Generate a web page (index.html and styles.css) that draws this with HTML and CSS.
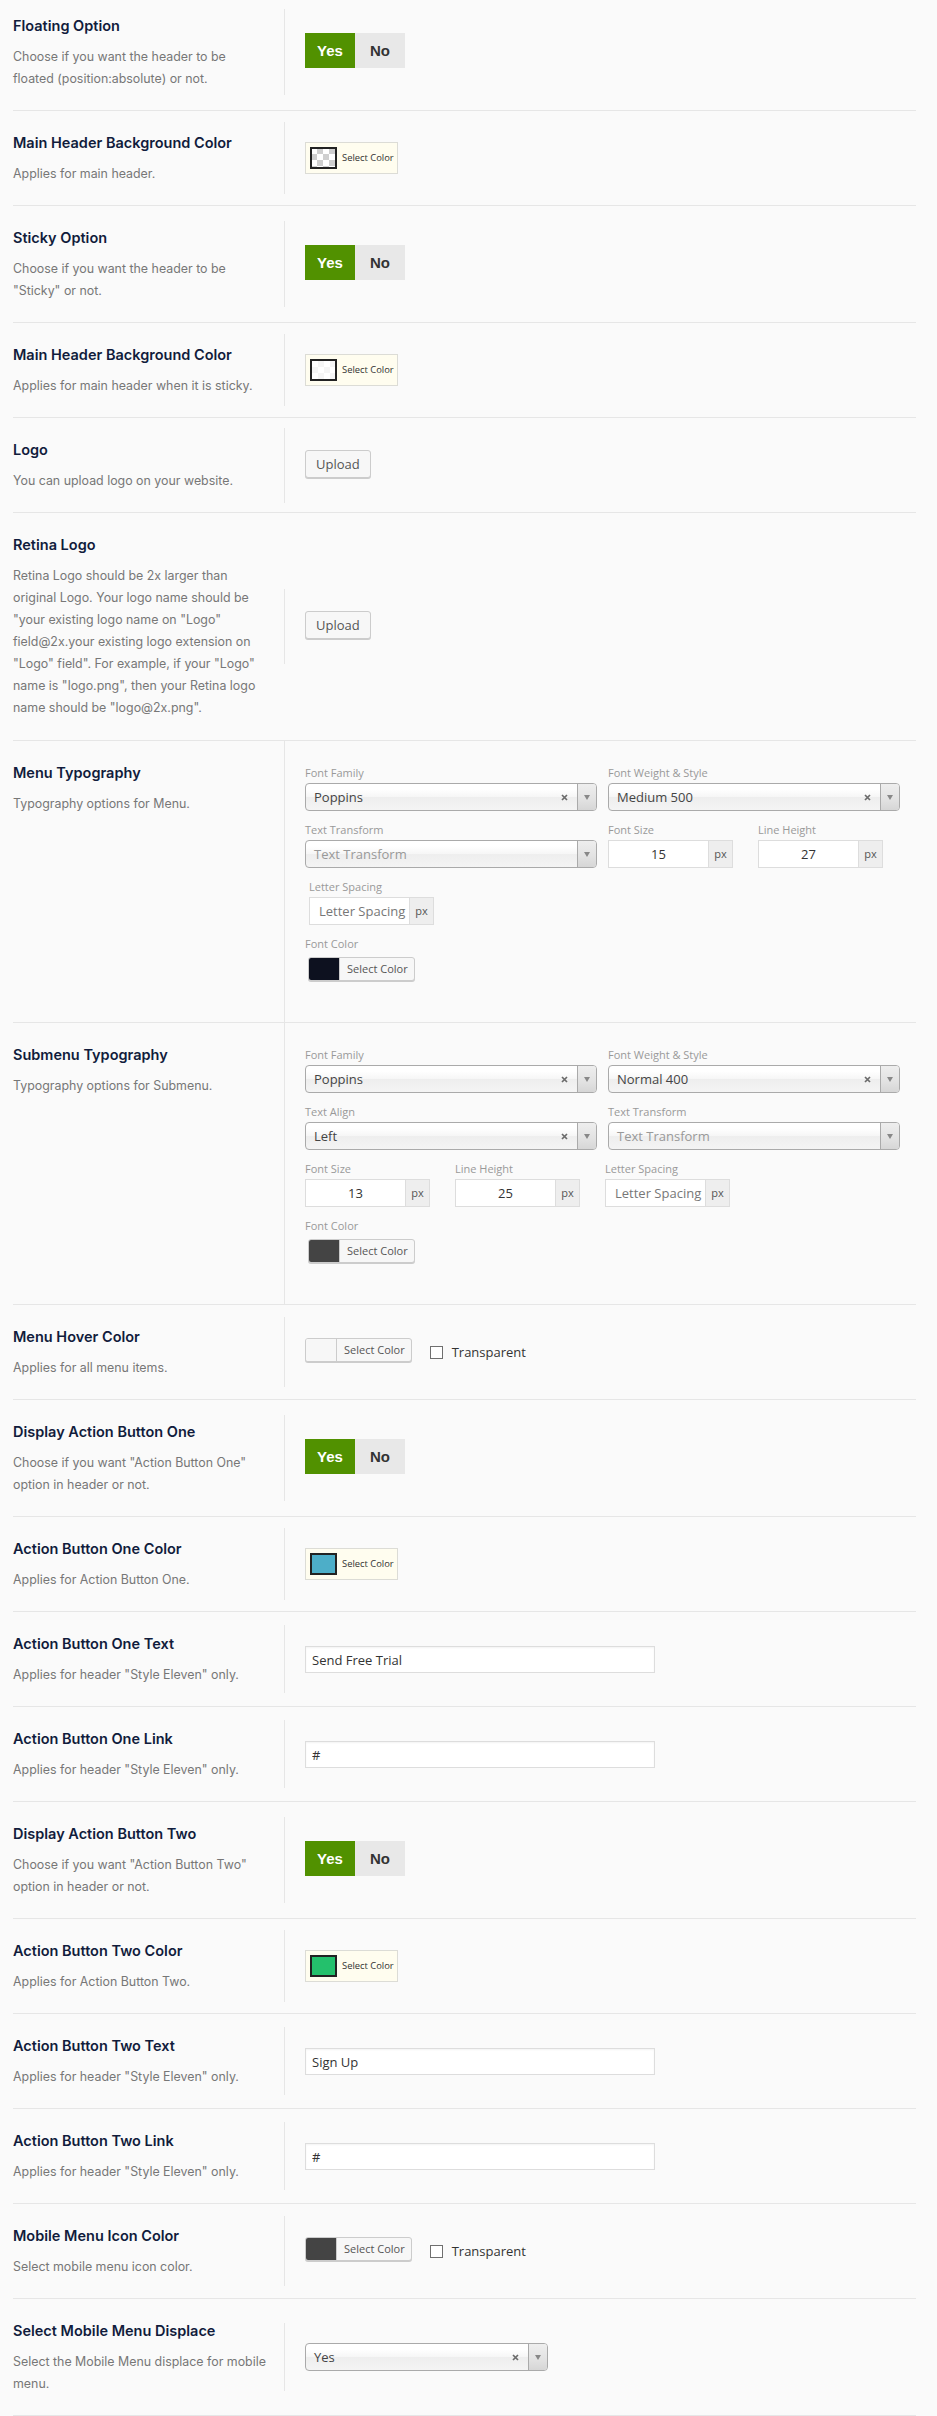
FILE: index.html
```html
<!DOCTYPE html>
<html lang="en">
<head>
<meta charset="utf-8">
<title>Header Options</title>
<link rel="stylesheet" href="styles.css">
</head>
<body>
<div class="options">

  <div class="row">
    <div class="info">
      <h3 class="title">Floating Option</h3>
      <p class="desc">Choose if you want the header to be floated (position:absolute) or not.</p>
    </div>
    <div class="field field--switch">
      <div class="switch"><span class="sw sw-yes">Yes</span><span class="sw sw-no">No</span></div>
    </div>
  </div>

  <div class="row">
    <div class="info">
      <h3 class="title">Main Header Background Color</h3>
      <p class="desc">Applies for main header.</p>
    </div>
    <div class="field field--cpick">
      <div class="cpick"><span class="cpick-swatch sw-checker"></span><span class="cpick-text">Select Color</span></div>
    </div>
  </div>

  <div class="row">
    <div class="info">
      <h3 class="title">Sticky Option</h3>
      <p class="desc">Choose if you want the header to be &quot;Sticky&quot; or not.</p>
    </div>
    <div class="field field--switch">
      <div class="switch"><span class="sw sw-yes">Yes</span><span class="sw sw-no">No</span></div>
    </div>
  </div>

  <div class="row">
    <div class="info">
      <h3 class="title">Main Header Background Color</h3>
      <p class="desc">Applies for main header when it is sticky.</p>
    </div>
    <div class="field field--cpick">
      <div class="cpick"><span class="cpick-swatch sw-faint"></span><span class="cpick-text">Select Color</span></div>
    </div>
  </div>

  <div class="row">
    <div class="info">
      <h3 class="title">Logo</h3>
      <p class="desc">You can upload logo on your website.</p>
    </div>
    <div class="field field--upload">
      <button class="btn" type="button">Upload</button>
    </div>
  </div>

  <div class="row row--tall">
    <div class="info">
      <h3 class="title">Retina Logo</h3>
      <p class="desc">Retina Logo should be 2x larger than original Logo. Your logo name should be &quot;your existing logo name on &quot;Logo&quot; field@2x.your existing logo extension on &quot;Logo&quot; field&quot;. For example, if your &quot;Logo&quot; name is &quot;logo.png&quot;, then your Retina logo name should be &quot;logo@2x.png&quot;.</p>
    </div>
    <div class="field field--upload">
      <button class="btn" type="button">Upload</button>
    </div>
  </div>

  <div class="row">
    <div class="info">
      <h3 class="title">Menu Typography</h3>
      <p class="desc">Typography options for Menu.</p>
    </div>
    <div class="field field--typo">
      <div class="typo-row">
        <div class="tf tf--half">
          <span class="tf-label">Font Family</span>
          <div class="select"><span class="select-val">Poppins</span><span class="select-clear"><svg width="7" height="7" viewBox="0 0 7 7"><path d="M1 1l5 5M6 1L1 6" stroke="#6b6b6b" stroke-width="1.7"/></svg></span><span class="select-arrow"><svg width="6" height="5" viewBox="0 0 6 5"><path d="M0 0h6L3 5z" fill="#888"/></svg></span></div>
        </div>
        <div class="tf tf--half">
          <span class="tf-label">Font Weight &amp; Style</span>
          <div class="select"><span class="select-val">Medium 500</span><span class="select-clear"><svg width="7" height="7" viewBox="0 0 7 7"><path d="M1 1l5 5M6 1L1 6" stroke="#6b6b6b" stroke-width="1.7"/></svg></span><span class="select-arrow"><svg width="6" height="5" viewBox="0 0 6 5"><path d="M0 0h6L3 5z" fill="#888"/></svg></span></div>
        </div>
      </div>
      <div class="typo-row">
        <div class="tf tf--half">
          <span class="tf-label">Text Transform</span>
          <div class="select"><span class="select-val select-val--ph">Text Transform</span><span class="select-arrow"><svg width="6" height="5" viewBox="0 0 6 5"><path d="M0 0h6L3 5z" fill="#888"/></svg></span></div>
        </div>
        <div class="tf tf--quarter">
          <span class="tf-label">Font Size</span>
          <div class="num"><input class="num-in" type="text" value="15"><span class="num-unit">px</span></div>
        </div>
        <div class="tf tf--quarter">
          <span class="tf-label">Line Height</span>
          <div class="num"><input class="num-in" type="text" value="27"><span class="num-unit">px</span></div>
        </div>
      </div>
      <div class="typo-row typo-row--indent">
        <div class="tf tf--quarter">
          <span class="tf-label">Letter Spacing</span>
          <div class="num"><input class="num-in num-in--ph" type="text" placeholder="Letter Spacing"><span class="num-unit">px</span></div>
        </div>
      </div>
      <div class="tf">
        <span class="tf-label">Font Color</span>
        <div class="wpc wpc--typo"><span class="wpc-swatch sw-navy"></span><span class="wpc-text">Select Color</span></div>
      </div>
    </div>
  </div>

  <div class="row">
    <div class="info">
      <h3 class="title">Submenu Typography</h3>
      <p class="desc">Typography options for Submenu.</p>
    </div>
    <div class="field field--typo">
      <div class="typo-row">
        <div class="tf tf--half">
          <span class="tf-label">Font Family</span>
          <div class="select"><span class="select-val">Poppins</span><span class="select-clear"><svg width="7" height="7" viewBox="0 0 7 7"><path d="M1 1l5 5M6 1L1 6" stroke="#6b6b6b" stroke-width="1.7"/></svg></span><span class="select-arrow"><svg width="6" height="5" viewBox="0 0 6 5"><path d="M0 0h6L3 5z" fill="#888"/></svg></span></div>
        </div>
        <div class="tf tf--half">
          <span class="tf-label">Font Weight &amp; Style</span>
          <div class="select"><span class="select-val">Normal 400</span><span class="select-clear"><svg width="7" height="7" viewBox="0 0 7 7"><path d="M1 1l5 5M6 1L1 6" stroke="#6b6b6b" stroke-width="1.7"/></svg></span><span class="select-arrow"><svg width="6" height="5" viewBox="0 0 6 5"><path d="M0 0h6L3 5z" fill="#888"/></svg></span></div>
        </div>
      </div>
      <div class="typo-row">
        <div class="tf tf--half">
          <span class="tf-label">Text Align</span>
          <div class="select"><span class="select-val">Left</span><span class="select-clear"><svg width="7" height="7" viewBox="0 0 7 7"><path d="M1 1l5 5M6 1L1 6" stroke="#6b6b6b" stroke-width="1.7"/></svg></span><span class="select-arrow"><svg width="6" height="5" viewBox="0 0 6 5"><path d="M0 0h6L3 5z" fill="#888"/></svg></span></div>
        </div>
        <div class="tf tf--half">
          <span class="tf-label">Text Transform</span>
          <div class="select"><span class="select-val select-val--ph">Text Transform</span><span class="select-arrow"><svg width="6" height="5" viewBox="0 0 6 5"><path d="M0 0h6L3 5z" fill="#888"/></svg></span></div>
        </div>
      </div>
      <div class="typo-row">
        <div class="tf tf--quarter">
          <span class="tf-label">Font Size</span>
          <div class="num"><input class="num-in" type="text" value="13"><span class="num-unit">px</span></div>
        </div>
        <div class="tf tf--quarter">
          <span class="tf-label">Line Height</span>
          <div class="num"><input class="num-in" type="text" value="25"><span class="num-unit">px</span></div>
        </div>
        <div class="tf tf--quarter">
          <span class="tf-label">Letter Spacing</span>
          <div class="num"><input class="num-in num-in--ph" type="text" placeholder="Letter Spacing"><span class="num-unit">px</span></div>
        </div>
      </div>
      <div class="tf">
        <span class="tf-label">Font Color</span>
        <div class="wpc wpc--typo"><span class="wpc-swatch sw-dark"></span><span class="wpc-text">Select Color</span></div>
      </div>
    </div>
  </div>

  <div class="row">
    <div class="info">
      <h3 class="title">Menu Hover Color</h3>
      <p class="desc">Applies for all menu items.</p>
    </div>
    <div class="field field--wpc">
      <div class="wpc"><span class="wpc-swatch sw-light"></span><span class="wpc-text">Select Color</span></div>
      <label class="chk-label"><input class="chk" type="checkbox">Transparent</label>
    </div>
  </div>

  <div class="row">
    <div class="info">
      <h3 class="title">Display Action Button One</h3>
      <p class="desc">Choose if you want &quot;Action Button One&quot; option in header or not.</p>
    </div>
    <div class="field field--switch">
      <div class="switch"><span class="sw sw-yes">Yes</span><span class="sw sw-no">No</span></div>
    </div>
  </div>

  <div class="row">
    <div class="info">
      <h3 class="title">Action Button One Color</h3>
      <p class="desc">Applies for Action Button One.</p>
    </div>
    <div class="field field--cpick">
      <div class="cpick"><span class="cpick-swatch sw-blue"></span><span class="cpick-text">Select Color</span></div>
    </div>
  </div>

  <div class="row">
    <div class="info">
      <h3 class="title">Action Button One Text</h3>
      <p class="desc">Applies for header &quot;Style Eleven&quot; only.</p>
    </div>
    <div class="field field--text">
      <input class="text-in" type="text" value="Send Free Trial">
    </div>
  </div>

  <div class="row">
    <div class="info">
      <h3 class="title">Action Button One Link</h3>
      <p class="desc">Applies for header &quot;Style Eleven&quot; only.</p>
    </div>
    <div class="field field--text">
      <input class="text-in" type="text" value="#">
    </div>
  </div>

  <div class="row">
    <div class="info">
      <h3 class="title">Display Action Button Two</h3>
      <p class="desc">Choose if you want &quot;Action Button Two&quot; option in header or not.</p>
    </div>
    <div class="field field--switch">
      <div class="switch"><span class="sw sw-yes">Yes</span><span class="sw sw-no">No</span></div>
    </div>
  </div>

  <div class="row">
    <div class="info">
      <h3 class="title">Action Button Two Color</h3>
      <p class="desc">Applies for Action Button Two.</p>
    </div>
    <div class="field field--cpick">
      <div class="cpick"><span class="cpick-swatch sw-green"></span><span class="cpick-text">Select Color</span></div>
    </div>
  </div>

  <div class="row">
    <div class="info">
      <h3 class="title">Action Button Two Text</h3>
      <p class="desc">Applies for header &quot;Style Eleven&quot; only.</p>
    </div>
    <div class="field field--text">
      <input class="text-in" type="text" value="Sign Up">
    </div>
  </div>

  <div class="row">
    <div class="info">
      <h3 class="title">Action Button Two Link</h3>
      <p class="desc">Applies for header &quot;Style Eleven&quot; only.</p>
    </div>
    <div class="field field--text">
      <input class="text-in" type="text" value="#">
    </div>
  </div>

  <div class="row">
    <div class="info">
      <h3 class="title">Mobile Menu Icon Color</h3>
      <p class="desc">Select mobile menu icon color.</p>
    </div>
    <div class="field field--wpc">
      <div class="wpc"><span class="wpc-swatch sw-dark"></span><span class="wpc-text">Select Color</span></div>
      <label class="chk-label"><input class="chk" type="checkbox">Transparent</label>
    </div>
  </div>

  <div class="row">
    <div class="info">
      <h3 class="title">Select Mobile Menu Displace</h3>
      <p class="desc">Select the Mobile Menu displace for mobile menu.</p>
    </div>
    <div class="field field--select">
      <div class="select select--mobile"><span class="select-val">Yes</span><span class="select-clear"><svg width="7" height="7" viewBox="0 0 7 7"><path d="M1 1l5 5M6 1L1 6" stroke="#6b6b6b" stroke-width="1.7"/></svg></span><span class="select-arrow"><svg width="6" height="5" viewBox="0 0 6 5"><path d="M0 0h6L3 5z" fill="#888"/></svg></span></div>
    </div>
  </div>

</div>
</body>
</html>
```

FILE: styles.css
```css
html, body {
  margin: 0;
  padding: 0;
  background: #fafafa;
}

.options {
  padding: 0 21px 0 13px;
}

.row {
  display: flex;
  align-items: flex-start;
  border-bottom: 1px solid #e6e6e6;
}

.row:first-child {
  margin-top: -6px;
}

.info {
  flex: none;
  width: 271px;
  box-sizing: border-box;
  padding: 22px 0 20px 0;
}

.row--tall .info {
  padding-bottom: 21px;
}

.title {
  margin: 0 0 10px;
  font-family: Inter, "Open Sans", sans-serif;
  font-weight: 600;
  font-size: 14.5px;
  line-height: 20px;
  color: #111c3c;
}

.desc {
  margin: 0;
  width: 255px;
  font-family: Inter, "Open Sans", sans-serif;
  font-size: 12.4px;
  line-height: 22px;
  color: #777777;
}

.field {
  flex: 1;
  align-self: center;
  display: flex;
  align-items: center;
  border-left: 1px solid #e6e6e6;
  padding-left: 20px;
  font-family: "Open Sans", sans-serif;
  font-size: 13px;
  line-height: 20px;
}

.field--switch { padding-top: 24px; padding-bottom: 27px; }
.field--cpick  { padding-top: 20px; padding-bottom: 20px; }
.field--upload { padding-top: 22px; padding-bottom: 25px; }
.field--wpc    { padding-top: 20px; padding-bottom: 25px; }
.field--text   { padding-top: 21px; padding-bottom: 20px; }
.field--select { padding-top: 20px; padding-bottom: 20px; }

.field--typo {
  align-self: stretch;
  display: block;
  padding-top: 22px;
  padding-bottom: 41px;
}

/* Yes / No switch */
.switch {
  display: flex;
}

.sw {
  display: flex;
  align-items: center;
  justify-content: center;
  width: 50px;
  height: 35px;
  font-family: "Liberation Sans", Arial, sans-serif;
  font-weight: 700;
  font-size: 15px;
}

.sw-yes {
  background: #519100;
  color: #ffffff;
}

.sw-no {
  background: #e8e8e8;
  color: #333333;
}

/* Cream colour picker */
.cpick {
  display: flex;
  align-items: center;
  width: 93px;
  height: 32px;
  box-sizing: border-box;
  padding-left: 4px;
  border: 1px solid #dcdcd6;
  background: #fffdef;
}

.cpick-swatch {
  flex: none;
  width: 27px;
  height: 22px;
  box-sizing: border-box;
  border: 2px solid #222222;
  margin-right: 5px;
}

.cpick-text {
  font-family: "Open Sans", sans-serif;
  font-size: 9.4px;
  color: #333333;
  white-space: nowrap;
}

.sw-checker {
  background-color: #ffffff;
  background-image: conic-gradient(#cfcfcf 25%, #ffffff 0 50%, #cfcfcf 0 75%, #ffffff 0);
  background-size: 12px 12px;
  background-position: -1px -1px;
}

.sw-faint {
  background-color: #ffffff;
  background-image: conic-gradient(#f5f5f5 25%, #ffffff 0 50%, #f5f5f5 0 75%, #ffffff 0);
  background-size: 12px 12px;
}

.sw-blue { background: #4daec8; }
.sw-green { background: #24c06c; }
.sw-navy { background: #0d111f; }
.sw-dark { background: #444444; }
.sw-light { background: #f7f7f7; }

/* Upload button */
.btn {
  height: 28px;
  padding: 0 10px;
  border: 1px solid #cccccc;
  border-radius: 3px;
  background: #f7f7f7;
  box-shadow: 0 1px 0 #cccccc;
  font-family: "Open Sans", sans-serif;
  font-size: 13px;
  color: #555555;
}

/* WP-style colour button */
.wpc {
  display: flex;
  flex: none;
  height: 24px;
  box-sizing: border-box;
  border: 1px solid #cccccc;
  border-radius: 3px;
  box-shadow: 0 1px 0 #cccccc;
  background: #f7f7f7;
  overflow: hidden;
}

.wpc--typo {
  width: max-content;
  margin-top: 3px;
  margin-left: 3px;
}

.wpc-swatch {
  width: 30px;
  border-right: 1px solid #cccccc;
}

.wpc-text {
  padding: 0 6px 0 7px;
  font-family: "Open Sans", sans-serif;
  font-size: 11px;
  line-height: 22px;
  color: #555555;
  white-space: nowrap;
}

.chk-label {
  display: flex;
  align-items: center;
  margin-left: 18px;
  margin-top: 5px;
  font-family: "Open Sans", sans-serif;
  font-size: 13px;
  color: #333333;
}

.chk {
  appearance: none;
  -webkit-appearance: none;
  width: 13px;
  height: 13px;
  margin: 0 9px 0 0;
  border: 1px solid #6f6f6f;
  background: #ffffff;
}

/* Text inputs */
.text-in {
  width: 350px;
  height: 27px;
  box-sizing: border-box;
  margin: 0;
  padding: 0 6px;
  border: 1px solid #dddddd;
  background: #ffffff;
  box-shadow: inset 0 1px 2px rgba(0, 0, 0, 0.05);
  font-family: "Open Sans", sans-serif;
  font-size: 13px;
  color: #333333;
}

/* Typography */
.typo-row {
  display: flex;
  gap: 11px;
  margin-bottom: 9px;
}

.typo-row--indent {
  padding-left: 4px;
}

.tf--half {
  width: 292px;
}

.tf--quarter {
  width: 139px;
}

.tf-label {
  display: block;
  font-family: "Open Sans", sans-serif;
  font-size: 11px;
  line-height: 20px;
  color: #999999;
  white-space: nowrap;
}

.select {
  display: flex;
  align-items: center;
  height: 28px;
  box-sizing: border-box;
  padding-left: 8px;
  border: 1px solid #aaaaaa;
  border-radius: 4px;
  background: linear-gradient(to bottom, #ffffff 0%, #ffffff 20%, #f6f6f6 50%, #eeeeee 52%, #f4f4f4 100%);
  font-family: "Open Sans", sans-serif;
  font-size: 13px;
  color: #444444;
}

.select--mobile {
  width: 243px;
}

.select-val {
  flex: 1;
  white-space: nowrap;
}

.select-val--ph {
  color: #999999;
}

.select-clear {
  display: flex;
  margin-right: 9px;
}

.select-arrow {
  display: flex;
  align-items: center;
  justify-content: center;
  width: 18px;
  align-self: stretch;
  border-left: 1px solid #aaaaaa;
  border-radius: 0 3px 3px 0;
  background: linear-gradient(to bottom, #eeeeee 0%, #e2e2e2 60%, #d6d6d6 100%);
}

.num {
  display: flex;
  width: 125px;
  height: 28px;
}

.num-in {
  flex: 1;
  min-width: 0;
  box-sizing: border-box;
  margin: 0;
  padding: 0;
  border: 1px solid #dddddd;
  border-right: 0;
  background: #ffffff;
  font-family: "Open Sans", sans-serif;
  font-size: 13px;
  text-align: center;
  color: #333333;
}

.num-in--ph {
  text-align: left;
  padding-left: 9px;
}

.num-in--ph::placeholder {
  color: #777777;
}

.num-unit {
  display: flex;
  align-items: center;
  justify-content: center;
  width: 25px;
  box-sizing: border-box;
  border: 1px solid #dddddd;
  background: #eeeeee;
  font-family: "Open Sans", sans-serif;
  font-size: 11px;
  color: #555555;
}
```
